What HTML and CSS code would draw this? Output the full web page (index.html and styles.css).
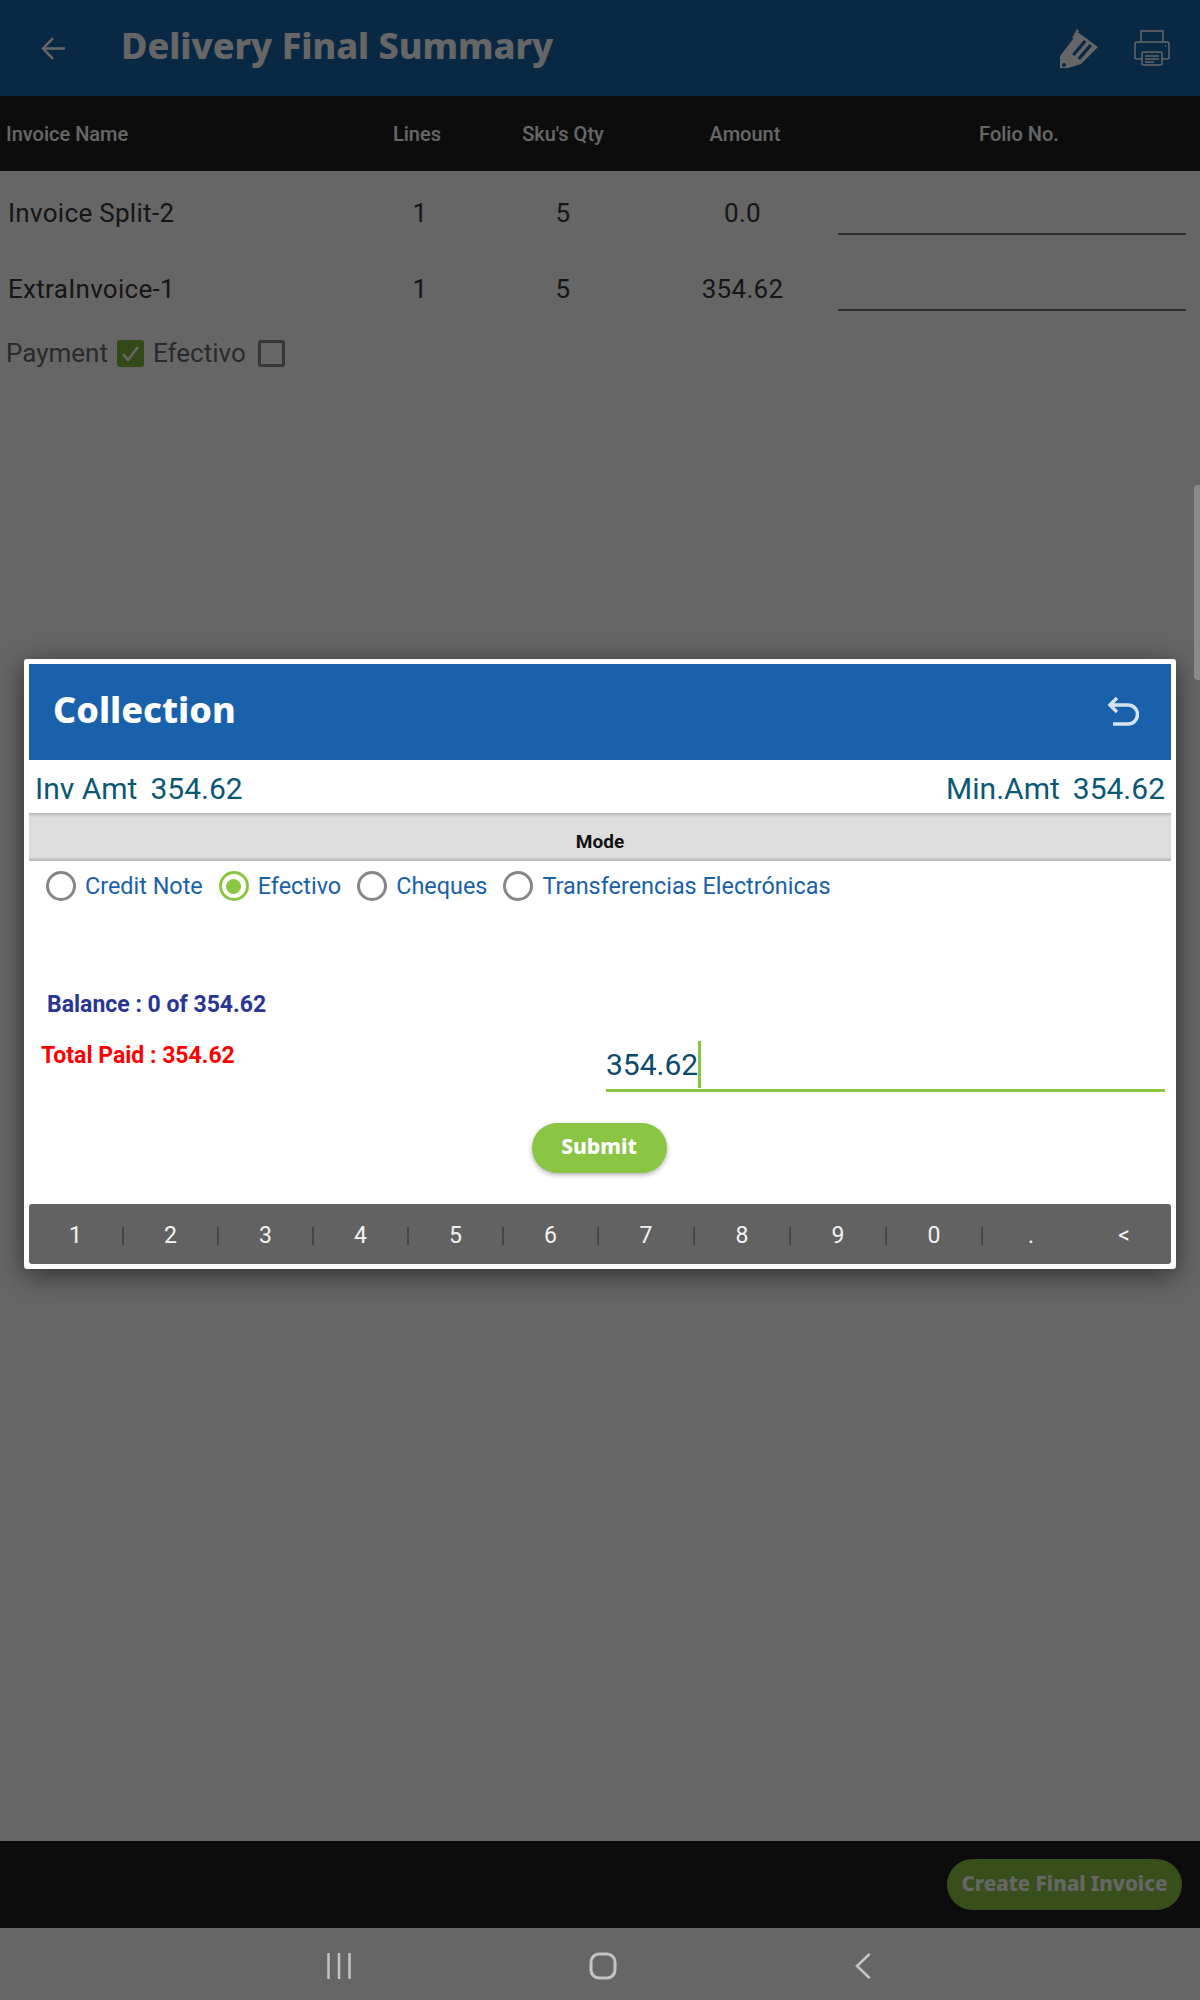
FILE: index.html
```html
<!DOCTYPE html>
<html lang="en">
<head>
  <meta charset="UTF-8" />
  <meta name="viewport" content="width=device-width, initial-scale=1.0" />
  <title>Delivery Final Summary</title>
  <link rel="stylesheet" href="styles.css">
</head>
<body>
  <div class="screen">
    <div class="app">
      <header class="topbar">
        <svg class="back-icon" viewBox="0 0 24 24" width="25" height="25"><path d="M23 12H2.500M11.500 2L2 12l9.500 10" fill="none" stroke="#fff" stroke-width="2.400"/></svg>
        <h1 class="title">Delivery Final Summary</h1>
        <svg class="pen-icon" viewBox="0 0 40 40" width="40" height="40">
          <path d="M13 10L18 1l2 2-4 8z" fill="#fff"/>
          <path d="M1 28L18 6l2-1 19 14L22 36 9 40H1zM5 35a2 2 0 1 0 0.100 0z" fill="#fff" fill-rule="evenodd"/>
          <path d="M13 26l12-14 2.500 2-12 14zM18.500 30l12-14 2.500 2-12 14z" fill="#1864ab"/>
        </svg>
        <svg class="print-icon" viewBox="0 0 36 36" width="36" height="36" fill="none" stroke="#fff" stroke-width="1.500">
          <path d="M7 12V1h22v11"/>
          <path d="M8 29H3a2 2 0 0 1-2-2V14a2 2 0 0 1 2-2h30a2 2 0 0 1 2 2v13a2 2 0 0 1-2 2h-5"/>
          <rect x="8" y="22" width="20" height="13" rx="1.500"/>
          <path d="M11 26h14M11 29h14M11 32h9"/>
          <path d="M31 16h1"/>
        </svg>
      </header>

      <div class="table-head">
        <div class="cell-name">Invoice Name</div>
        <div>Lines</div>
        <div>Sku's Qty</div>
        <div>Amount</div>
        <div class="cell-folio">Folio No.</div>
      </div>

      <div class="table-row">
        <div class="cell-name">Invoice Split-2</div>
        <div>1</div>
        <div>5</div>
        <div>0.0</div>
        <div class="folio-line"></div>
      </div>
      <div class="table-row">
        <div class="cell-name">ExtraInvoice-1</div>
        <div>1</div>
        <div>5</div>
        <div>354.62</div>
        <div class="folio-line"></div>
      </div>

      <div class="payment-row">
        <span>Payment</span>
        <span class="checkbox checked">
          <svg viewBox="0 0 27 27" width="27" height="27"><path d="M6 14l5 6 10-13" fill="none" stroke="#fff" stroke-width="2.600"/></svg>
        </span>
        <span>Efectivo</span>
        <span class="checkbox"></span>
      </div>

      <div class="spacer"></div>

      <footer class="bottombar">
        <button class="create-btn">Create Final Invoice</button>
      </footer>
    </div>

    <div class="overlay">
      <div class="scroll-thumb"></div>
      <div class="modal">
        <div class="modal-head">
          <h2>Collection</h2>
          <svg viewBox="0 0 32 30" width="32" height="30"><path d="M3 8h18a8 8 0 0 1 0 19H6M10 1L3 8l7 7" fill="none" stroke="#d5e3f1" stroke-width="3.500"/></svg>
        </div>

        <div class="amounts">
          <div><span>Inv Amt</span><span>354.62</span></div>
          <div><span>Min.Amt</span><span>354.62</span></div>
        </div>

        <div class="mode-bar">Mode</div>

        <div class="modes">
          <label class="mode"><span class="radio"></span>Credit Note</label>
          <label class="mode"><span class="radio on"></span>Efectivo</label>
          <label class="mode"><span class="radio"></span>Cheques</label>
          <label class="mode"><span class="radio"></span>Transferencias Electrónicas</label>
        </div>

        <div class="balance">Balance : 0 of 354.62</div>

        <div class="paid-row">
          <div class="total-paid">Total Paid : 354.62</div>
          <div class="paid-input"><span class="paid-value">354.62</span></div>
        </div>

        <div class="submit-wrap">
          <button class="submit-btn">Submit</button>
        </div>

        <div class="keypad">
          <span class="key">1</span>
          <span class="key">2</span>
          <span class="key">3</span>
          <span class="key">4</span>
          <span class="key">5</span>
          <span class="key">6</span>
          <span class="key">7</span>
          <span class="key">8</span>
          <span class="key">9</span>
          <span class="key">0</span>
          <span class="key no-sep">.</span>
          <span class="key no-sep last">&lt;</span>
        </div>
      </div>
    </div>

    <nav class="navbar">
      <svg viewBox="0 0 24 26" width="24" height="26"><path d="M1.500 1v24M12 1v24M22.500 1v24" stroke="#c4c4c4" stroke-width="2.500" stroke-linecap="round" fill="none"/></svg>
      <svg viewBox="0 0 28 28" width="28" height="28"><rect x="2" y="2" width="24" height="24" rx="8" stroke="#c4c4c4" stroke-width="3" fill="none"/></svg>
      <svg viewBox="0 0 16 26" width="16" height="26"><path d="M14 1.500L2 13l12 11.500" stroke="#c4c4c4" stroke-width="2.500" stroke-linecap="round" fill="none"/></svg>
    </nav>
  </div>
</body>
</html>
```

FILE: styles.css
```css
* {
  box-sizing: border-box;
}

body {
  margin: 0;
  font-family: Roboto, sans-serif;
  background-color: #fff;
}

.screen {
  position: relative;
  width: 1200px;
  height: 2000px;
  display: flex;
  flex-direction: column;
  overflow: hidden;
}

.app {
  flex: 1;
  display: flex;
  flex-direction: column;
  background: #fff;
}

.topbar {
  height: 96px;
  background: #1864ab;
  display: flex;
  align-items: center;
  padding: 0 30px 0 41px;
  color: #fff;
}

.back-icon {
  margin-right: 55px;
}

.title {
  flex: 1;
  margin: 0 0 5px;
  font-family: "Noto Sans", sans-serif;
  font-size: 36px;
  font-weight: 800;
}

.pen-icon {
  margin-right: 35px;
}

.table-head,
.table-row {
  display: grid;
  align-items: center;
  text-align: center;
}

.table-head {
  grid-template-columns: 358px 118px 174px 190px 346px;
  height: 75px;
  background: #202020;
  color: #fff;
  font-size: 20px;
  font-weight: 500;
}

.table-head .cell-name {
  padding-left: 6px;
}

.cell-name {
  text-align: left;
}

.cell-folio {
  padding-left: 12px;
}

.table-row {
  grid-template-columns: 353px 118px 168px 191px 348px;
  height: 76px;
  padding: 8px 0 0 8px;
  color: #383838;
  font-size: 26px;
  letter-spacing: 0.3px;
}

.folio-line {
  height: 40px;
  border-bottom: 2px solid #777;
  align-self: end;
  margin-bottom: 12px;
}

.payment-row {
  display: flex;
  align-items: center;
  gap: 9px;
  padding: 15px 0 0 6px;
  color: #6a6a6a;
  font-size: 26px;
}

.checkbox {
  width: 27px;
  height: 27px;
  border: 3px solid #888;
  border-radius: 3px;
  margin-left: 3px;
}

.checkbox.checked {
  margin-left: 0;
  border: 0;
  background: #7cb83a;
}

.spacer {
  flex: 1;
}

.bottombar {
  height: 87px;
  background: #202020;
  display: flex;
  align-items: center;
  justify-content: flex-end;
  padding-right: 18px;
}

.create-btn {
  width: 235px;
  height: 51px;
  border: 0;
  border-radius: 26px;
  background: #8bc544;
  color: #fff;
  font-family: "Noto Sans", sans-serif;
  font-size: 20.500px;
  font-weight: 800;
  padding: 0 0 4px;
}

.overlay {
  position: absolute;
  top: 0;
  left: 0;
  right: 0;
  bottom: 72px;
  background: rgba(0, 0, 0, 0.6);
  display: flex;
  align-items: center;
  justify-content: center;
}

.scroll-thumb {
  position: absolute;
  top: 485px;
  right: 0;
  width: 6px;
  height: 195px;
  background: #8a8a8a;
  border-radius: 4px 0 0 4px;
}

.modal {
  width: 1152px;
  height: 610px;
  background: #fff;
  border: 5px solid #fff;
  border-radius: 3px;
  box-shadow: 0 6px 28px rgba(0, 0, 0, 0.55);
  display: flex;
  flex-direction: column;
}

.modal-head {
  height: 96px;
  background: #1961ab;
  display: flex;
  align-items: center;
  justify-content: space-between;
  padding: 0 32px 0 24px;
  color: #fff;
}

.modal-head h2 {
  margin: 0 0 5px;
  font-family: "Noto Sans", sans-serif;
  font-size: 36px;
  font-weight: 800;
}

.amounts {
  height: 53px;
  display: flex;
  align-items: center;
  justify-content: space-between;
  padding: 3px 6px 0 6px;
  color: #0b5875;
  font-size: 30px;
}

.amounts span + span {
  margin-left: 13px;
}

.mode-bar {
  height: 48px;
  background: #dedede;
  box-shadow: inset 0 4px 3px -2px #b5b5b5, inset 0 -4px 3px -2px #b5b5b5;
  text-align: center;
  line-height: 58px;
  font-size: 19px;
  font-weight: 700;
  color: #111;
}

.modes {
  display: flex;
  align-items: center;
  padding: 10px 0 0 17px;
  color: #1a60a8;
  font-size: 23.400px;
}

.mode {
  display: flex;
  align-items: center;
  gap: 9px;
  margin-right: 16px;
}

.radio {
  width: 30px;
  height: 30px;
  border: 3px solid #868686;
  border-radius: 50%;
  display: flex;
  align-items: center;
  justify-content: center;
}

.radio.on {
  border-color: #8bc544;
}

.radio.on::after {
  content: "";
  width: 15px;
  height: 15px;
  border-radius: 50%;
  background: #8bc544;
}

.balance {
  margin-top: 90px;
  padding-left: 18px;
  color: #283593;
  font-size: 23px;
  font-weight: 700;
}

.paid-row {
  display: flex;
  justify-content: space-between;
  align-items: flex-start;
  padding: 24px 6px 0 12px;
}

.total-paid {
  color: #f00;
  font-size: 23px;
  font-weight: 700;
}

.paid-input {
  width: 559px;
  height: 50px;
  border-bottom: 3px solid #8bc544;
  color: #0d4a6b;
  font-size: 30px;
  padding-top: 5px;
}

.paid-value {
  border-right: 3px solid #8bc544;
  padding: 6px 0;
}

.submit-wrap {
  display: flex;
  justify-content: center;
  margin-top: 31px;
  padding-right: 2px;
}

.submit-btn {
  width: 135px;
  height: 50px;
  border: 0;
  border-radius: 25px;
  background: #8bc544;
  color: #fff;
  font-family: "Noto Sans", sans-serif;
  font-size: 21px;
  font-weight: 800;
  padding: 0 0 4px;
  box-shadow: 0 2px 5px rgba(0, 0, 0, 0.3);
}

.keypad {
  margin-top: auto;
  height: 60px;
  padding-top: 4px;
  background: #626262;
  border-radius: 3px;
  display: grid;
  grid-template-columns: repeat(6, 95px) repeat(4, 96px) 96px 92px;
  align-items: center;
  color: #f2f2f2;
  font-size: 23px;
}

.key {
  text-align: center;
  border-right: 2px solid #454545;
  line-height: 18px;
}

.key.no-sep {
  border-right: 0;
}

.key.last {
  padding-right: 2px;
}

.navbar {
  height: 72px;
  background: #666;
  display: flex;
  align-items: center;
  padding: 3px 0 0 327px;
  gap: 238px;
}
```
